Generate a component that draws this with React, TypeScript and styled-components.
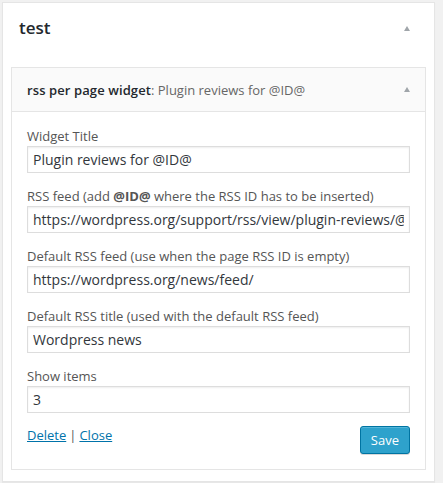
import React from "react";
import styled, { createGlobalStyle } from "styled-components";

const Global = createGlobalStyle`
  html, body { margin: 0; padding: 0; background: #f1f1f1; }
  body { padding: 2px; font-family: "Open Sans", "Liberation Sans", sans-serif; }
  * { box-sizing: border-box; }
`;

const Sidebar = styled.div`
  width: 433px;
  background: #fff;
  border: 1px solid #e5e5e5;
  box-shadow: 0 1px 1px rgba(0, 0, 0, 0.04);
`;

const SidebarHeader = styled.div`
  height: 50px;
  display: flex;
  align-items: center;
  justify-content: space-between;
  padding: 0 24px 0 16px;
`;

const SidebarTitle = styled.h2`
  margin: 0;
  font-size: 17px;
  font-weight: 600;
  color: #23282d;
  line-height: 24px;
`;

const Arrow = styled.span`
  width: 0;
  height: 0;
  border-left: 3.5px solid transparent;
  border-right: 3.5px solid transparent;
  border-bottom: 5px solid #a0a5aa;
  display: block;
`;

const WidgetList = styled.div`
  padding: 14px 8px 11px 8px;
`;

const Widget = styled.div`
  border: 1px solid #e5e5e5;
  background: #fff;
`;

const WidgetTop = styled.div`
  height: 44px;
  background: #fafafa;
  border-bottom: 1px solid #e5e5e5;
  display: flex;
  align-items: center;
  justify-content: space-between;
  padding: 0 15px 0 15px;
`;

const WidgetTitle = styled.h3`
  margin: 0;
  font-size: 13px;
  line-height: 18px;
  font-weight: 600;
  color: #23282d;
  letter-spacing: 0.1px;
`;

const InWidgetTitle = styled.span`
  font-weight: 400;
  color: #666;
  letter-spacing: 0;
`;

const WidgetInside = styled.div`
  padding: 15px 15px 15px 15px;
  display: flex;
  flex-direction: column;
`;

const Field = styled.div<{ $first?: boolean }>`
  margin-top: ${(p) => (p.$first ? "0" : "14px")};
  display: flex;
  flex-direction: column;
`;

const Label = styled.label`
  font-size: 13px;
  line-height: 19px;
  color: #555;
`;

const Strong = styled.strong`
  font-weight: 700;
`;

const Input = styled.input`
  width: 100%;
  height: 27px;
  border: 1px solid #ddd;
  box-shadow: inset 0 1px 2px rgba(0, 0, 0, 0.07);
  background: #fff;
  color: #32373c;
  font-family: "Open Sans", "Liberation Sans", sans-serif;
  font-size: 14px;
  padding: 0 5px;
  margin: 0;
  outline: none;
  border-radius: 0;
`;

const Actions = styled.div`
  margin-top: 13px;
  display: flex;
  justify-content: space-between;
  align-items: flex-start;
`;

const Links = styled.div`
  font-size: 13px;
  line-height: 18px;
  color: #555;
`;

const Link = styled.a`
  color: #0073aa;
  text-decoration: underline;
`;

const Sep = styled.span`
  margin: 0 3px;
  color: #555;
`;

const SaveButton = styled.button`
  height: 28px;
  padding: 0 10px 1px;
  background: #2ea2cc;
  border: 1px solid #0074a2;
  border-radius: 3px;
  box-shadow: inset 0 1px 0 rgba(120, 200, 230, 0.5), 0 1px 0 rgba(0, 0, 0, 0.15);
  color: #fff;
  font-family: "Open Sans", "Liberation Sans", sans-serif;
  font-size: 13px;
  line-height: 26px;
  cursor: pointer;
`;

export default function App() {
  return (
    <>
      <Global />
      <Sidebar>
        <SidebarHeader>
          <SidebarTitle>test</SidebarTitle>
          <Arrow />
        </SidebarHeader>
        <WidgetList>
          <Widget>
            <WidgetTop>
              <WidgetTitle>
                rss per page widget<InWidgetTitle>: Plugin reviews for @ID@</InWidgetTitle>
              </WidgetTitle>
              <Arrow />
            </WidgetTop>
            <WidgetInside>
              <Field $first>
                <Label>Widget Title</Label>
                <Input defaultValue="Plugin reviews for @ID@" />
              </Field>
              <Field>
                <Label>
                  RSS feed (add <Strong>@ID@</Strong> where the RSS ID has to be inserted)
                </Label>
                <Input defaultValue="https://wordpress.org/support/rss/view/plugin-reviews/@ID@" />
              </Field>
              <Field>
                <Label>Default RSS feed (use when the page RSS ID is empty)</Label>
                <Input defaultValue="https://wordpress.org/news/feed/" />
              </Field>
              <Field>
                <Label>Default RSS title (used with the default RSS feed)</Label>
                <Input defaultValue="Wordpress news" />
              </Field>
              <Field>
                <Label>Show items</Label>
                <Input defaultValue="3" />
              </Field>
              <Actions>
                <Links>
                  <Link href="#">Delete</Link>
                  <Sep>|</Sep>
                  <Link href="#">Close</Link>
                </Links>
                <SaveButton>Save</SaveButton>
              </Actions>
            </WidgetInside>
          </Widget>
        </WidgetList>
      </Sidebar>
    </>
  );
}
